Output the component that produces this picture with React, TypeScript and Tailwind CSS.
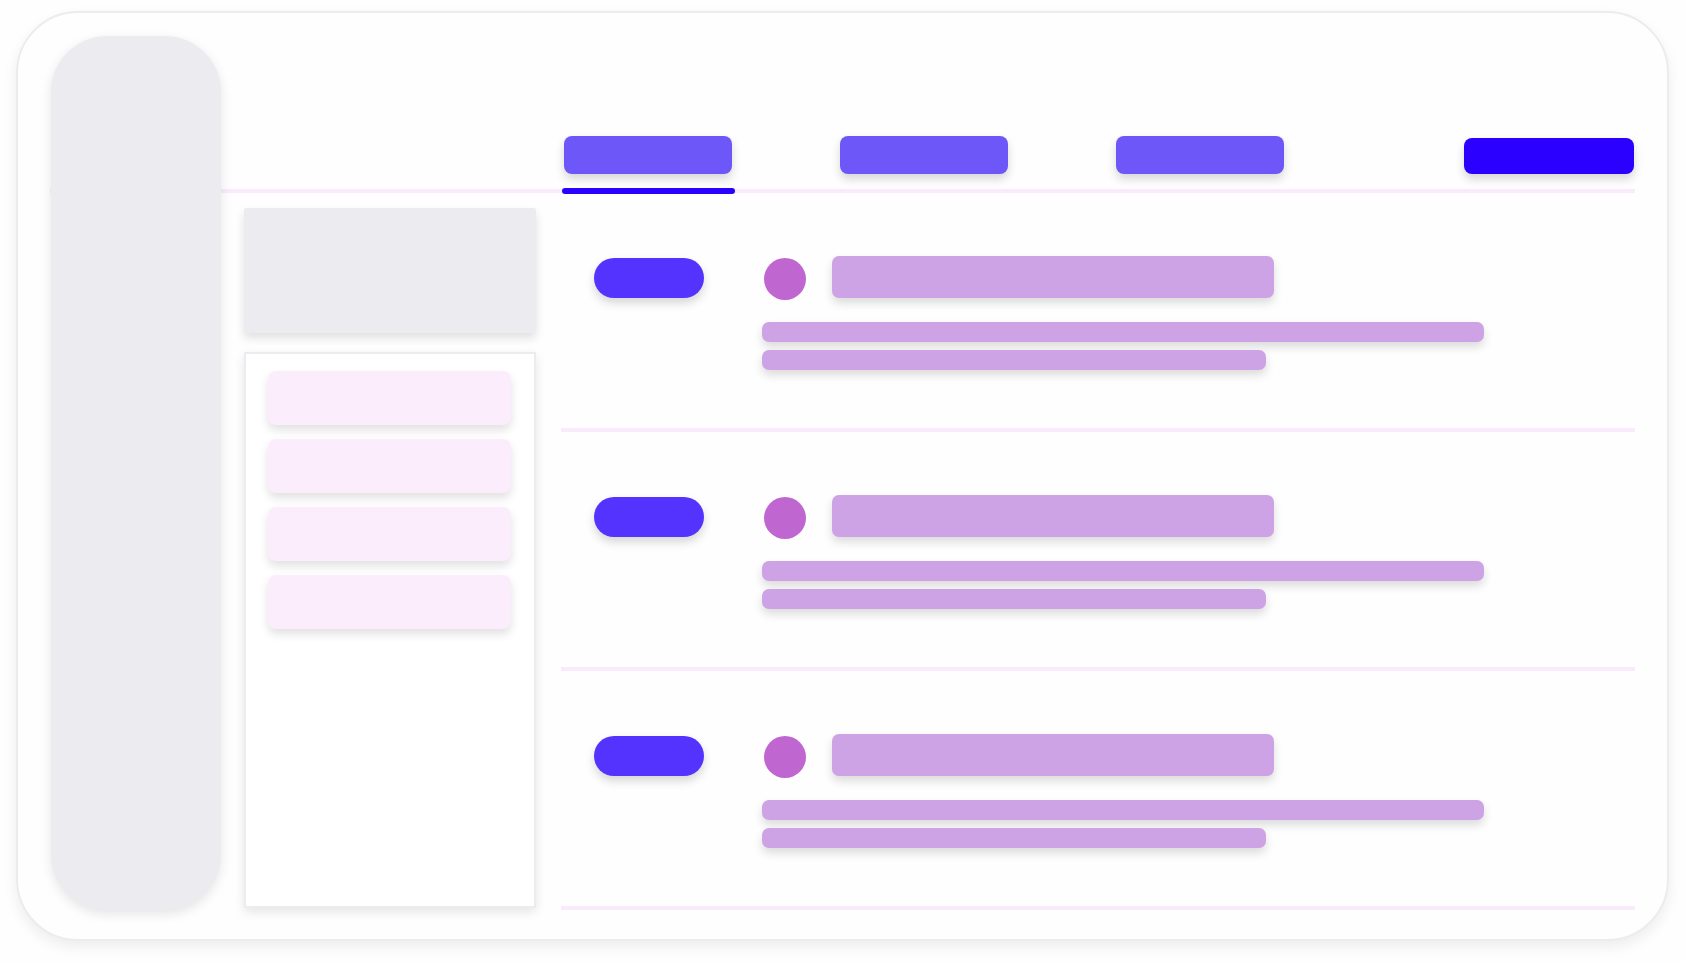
import React from "react";

function Row() {
  return (
    <div className="h-[239px] border-b-4 border-[#f9ebfc] flex pt-[63px] pl-[33px]">
      <div className="w-[110px] h-[40px] mt-[2px] rounded-full bg-[#5433ff] shadow-[0_5px_10px_rgba(0,0,0,0.16)]" />
      <div className="ml-[58px] flex flex-col">
        <div className="flex items-start">
          <div className="ml-[2px] mt-[2px] w-[42px] h-[42px] rounded-full bg-[#c066d0]" />
          <div className="ml-[26px] w-[442px] h-[42px] rounded-[7px] bg-[#cda3e5] shadow-[0_5px_10px_rgba(0,0,0,0.14)]" />
        </div>
        <div className="mt-[22px] w-[722px] h-[20px] rounded-[7px] bg-[#cda3e5] shadow-[0_5px_10px_rgba(0,0,0,0.14)]" />
        <div className="mt-[8px] w-[504px] h-[20px] rounded-[7px] bg-[#cda3e5] shadow-[0_5px_10px_rgba(0,0,0,0.14)]" />
      </div>
    </div>
  );
}

function Tab({ active }: { active?: boolean }) {
  return (
    <div className="relative w-[168px] h-[38px]">
      <div className="w-full h-full rounded-[8px] bg-[#6e57f9] shadow-[0_5px_10px_rgba(0,0,0,0.16)]" />
      {active && (
        <div className="absolute left-[-2px] right-[-3px] top-[52px] h-[6px] rounded-full bg-[#2a00ff]" />
      )}
    </div>
  );
}

export default function App() {
  return (
    <div className="w-[1686px] h-[962px] bg-[#fefefe] pt-[11px] pl-[16px] font-['Inter',sans-serif]">
      <div className="w-[1653px] h-[930px] rounded-[62px] border-2 border-[#ecebf0] bg-[#fefefe] shadow-[0_6px_14px_rgba(0,0,0,0.07)] pt-[23px] pl-[33px] pr-[32px] flex">
        <div className="w-[170px] h-[874px] shrink-0 rounded-[56px] bg-[#ecebf0] shadow-[0_4px_12px_rgba(0,0,0,0.1)] relative z-10" />
        <div className="flex-1 flex flex-col">
          <div className="h-[157px] ml-[-171px] pl-[171px] border-b-4 border-[#f9ebfc] flex items-end pb-[15px]">
            <div className="w-[343px] shrink-0" />
            <Tab active />
            <div className="w-[108px]" />
            <Tab />
            <div className="w-[108px]" />
            <Tab />
            <div className="flex-1" />
            <div className="w-[170px] h-[36px] mr-[1px] rounded-[8px] bg-[#2b00ff] shadow-[0_5px_10px_rgba(0,0,0,0.16)]" />
          </div>
          <div className="flex">
            <div className="ml-[23px] w-[292px] shrink-0 pt-[15px] flex flex-col">
              <div className="h-[125px] rounded-[2px] bg-[#ecebf0] shadow-[0_5px_10px_rgba(0,0,0,0.12)]" />
              <div className="mt-[19px] h-[556px] border-2 border-[#ecebf0] bg-white shadow-[0_4px_10px_rgba(0,0,0,0.1)] pt-[17px] pl-[22px] pr-[23px] flex flex-col gap-[14px]">
                {[0, 1, 2, 3].map((i) => (
                  <div
                    key={i}
                    className="h-[54px] rounded-[8px] bg-[#fbedfc] shadow-[0_5px_10px_rgba(0,0,0,0.12)]"
                  />
                ))}
              </div>
            </div>
            <div className="ml-[25px] flex-1 flex flex-col">
              <Row />
              <Row />
              <Row />
            </div>
          </div>
        </div>
      </div>
    </div>
  );
}
